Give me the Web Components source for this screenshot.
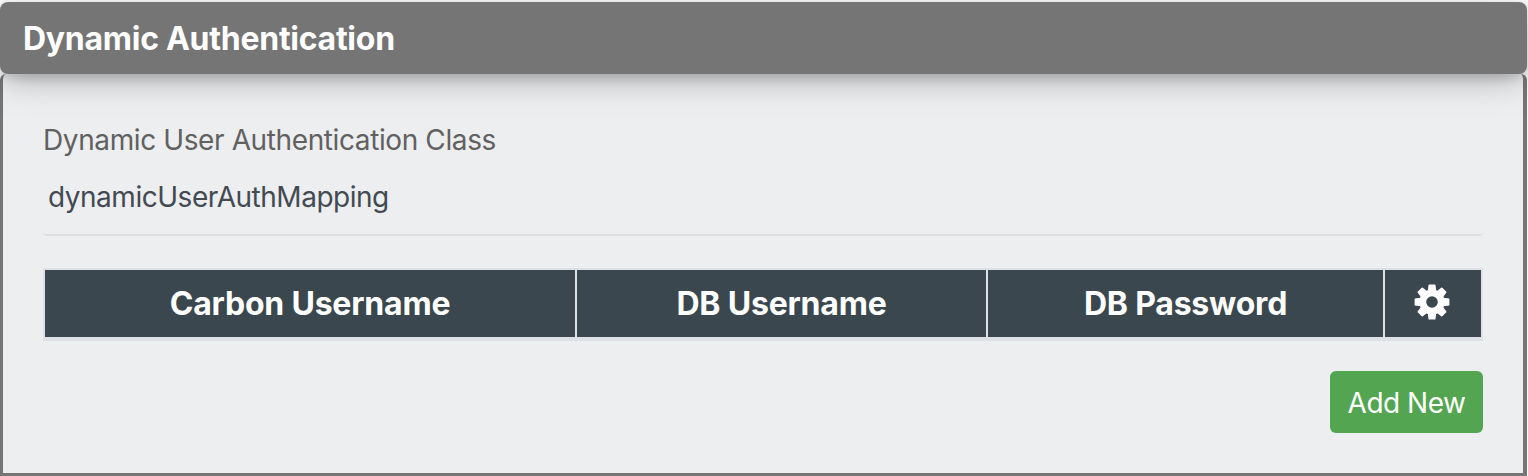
<!DOCTYPE html>
<html lang="en">
<head>
<meta charset="utf-8">
<title>Dynamic Authentication</title>
<style>
html, body { margin: 0; background: #fafafa; font-family: Inter, "Liberation Sans", sans-serif; }
</style>
</head>
<body>
<auth-panel heading="Dynamic Authentication">
  <text-field label="Dynamic User Authentication Class" value="dynamicUserAuthMapping"></text-field>
  <mapping-table></mapping-table>
  <action-button>Add New</action-button>
</auth-panel>
<script>
class AuthPanel extends HTMLElement {
  connectedCallback() {
    this.attachShadow({ mode: 'open' }).innerHTML = `
      <style>
        :host { display: flex; flex-direction: column; box-sizing: border-box; height: 476px; padding-top: 2px; overflow: hidden; }
        header { flex: none; box-sizing: border-box; height: 72px; margin-right: 1px; padding: 2px 0 0 23px; border-radius: 8px; background: #757575; color: #fff;
          display: flex; align-items: center; position: relative; z-index: 1;
          box-shadow: 0 8px 40px rgba(0,0,0,.14), 0 14px 20px -10px rgba(128,128,128,.4), 0 4px 10px rgba(0,0,0,.12); }
        h2 { margin: 0; font-size: 32px; line-height: 40px; font-weight: 700; letter-spacing: -0.27px; white-space: nowrap; }
        section { flex: 1; box-sizing: border-box; border: 3px solid #757575; border-top: 0; border-right-width: 4px; border-radius: 6px 6px 0 0; margin-right: 1px; background: #edeef0;
          padding: 46px 40px 0; display: flex; flex-direction: column; }
      </style>
      <header><h2>${this.getAttribute('heading')}</h2></header>
      <section><slot></slot></section>`;
  }
}
class TextField extends HTMLElement {
  connectedCallback() {
    this.attachShadow({ mode: 'open' }).innerHTML = `
      <style>
        :host { display: block; flex: none; font-size: 28px; }
        .label { line-height: 40px; color: #616161; letter-spacing: -0.39px; white-space: nowrap; }
        .value { box-sizing: border-box; height: 76px; padding: 17px 0 0 5px; line-height: 40px; color: #434a52; letter-spacing: -0.48px; border-bottom: 2px solid #dddfe3; border-radius: 4px; }
      </style>
      <div class="label"><span>${this.getAttribute('label')}</span></div>
      <div class="value"><span>${this.getAttribute('value')}</span></div>`;
  }
}
class CogIcon extends HTMLElement {
  connectedCallback() {
    const teeth = [0, 45, 90, 135, 180, 225, 270, 315]
      .map(a => `<path transform="rotate(${a})" d="M-3.7-11 -2.9-16.8H2.9L3.7-11Z"/>`).join('');
    this.attachShadow({ mode: 'open' }).innerHTML = `
      <style>:host { display: block; width: 36px; height: 36px; margin: 0 2px 4px 0; } svg { display: block; }</style>
      <svg width="36" height="36" viewBox="-18 -18 36 36">
        <g fill="#fff" stroke="#fff" stroke-width="1.2" stroke-linejoin="round">${teeth}</g>
        <circle r="9.2" fill="none" stroke="#fff" stroke-width="6.8"/>
      </svg>`;
  }
}
class MappingTable extends HTMLElement {
  connectedCallback() {
    this.attachShadow({ mode: 'open' }).innerHTML = `
      <style>
        :host { display: grid; flex: none; grid-template-columns: 530px 409px 395px 96px; gap: 2px; box-sizing: border-box; height: 73px; margin-top: 32px;
          padding: 2px 2px 4px; background: #dee2e6; color: #fff; font-size: 32px; letter-spacing: -0.2px; font-weight: 700; line-height: 40px; }
        div { background: #3b474e; display: flex; align-items: center; justify-content: center; white-space: nowrap; }
      </style>
      <div><span>Carbon Username</span></div>
      <div><span>DB Username</span></div>
      <div><span>DB Password</span></div>
      <div><cog-icon></cog-icon></div>`;
  }
}
class ActionButton extends HTMLElement {
  connectedCallback() {
    this.attachShadow({ mode: 'open' }).innerHTML = `
      <style>
        :host { display: block; flex: none; align-self: flex-end; margin-top: 30px; }
        button { display: block; box-sizing: border-box; width: 153px; height: 62px; padding: 2px 0 0; border: 0; border-radius: 6px; background: #53a551; color: #fff;
          font: 400 28px/40px Inter, "Liberation Sans", sans-serif; letter-spacing: -0.5px; white-space: nowrap; }
      </style>
      <button type="button"><slot></slot></button>`;
  }
}
customElements.define('cog-icon', CogIcon);
customElements.define('auth-panel', AuthPanel);
customElements.define('text-field', TextField);
customElements.define('mapping-table', MappingTable);
customElements.define('action-button', ActionButton);
</script>
</body>
</html>
